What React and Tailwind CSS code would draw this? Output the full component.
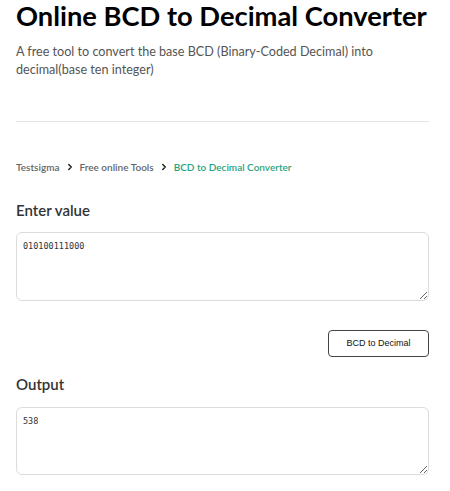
import React, { useState } from 'react';
import { ChevronRight } from 'lucide-react';

const font = { fontFamily: 'Lato, "Noto Sans", sans-serif' };

const App = () => {
  const [value, setValue] = useState('010100111000');
  const [output, setOutput] = useState('538');

  const convert = () => {
    const digits = value.replace(/\s/g, '').match(/.{1,4}/g) || [];
    setOutput(digits.map((d) => parseInt(d, 2)).join(''));
  };

  return (
    <div className="w-[450px] h-[491px] bg-white overflow-hidden" style={font}>
      <div className="w-[413px] ml-4">
        <h1 className="text-[27.3px] leading-[32px] font-bold text-black whitespace-nowrap">
          Online BCD to Decimal Converter
        </h1>
        <p className="mt-[11px] text-[12.6px] leading-[17.5px] text-[#555]">
          A free tool to convert the base BCD (Binary-Coded Decimal) into decimal(base ten integer)
        </p>

        <div className="mt-[43px] h-px bg-[#e3e3e3]" />

        <nav className="mt-[38px] flex items-center text-[10px] leading-[14px] font-semibold">
          <span className="text-[#666]">Testsigma</span>
          <ChevronRight size={10} strokeWidth={3.5} className="mx-[5px] text-[#222]" />
          <span className="text-[#666]">Free online Tools</span>
          <ChevronRight size={10} strokeWidth={3.5} className="mx-[5px] text-[#222]" />
          <span className="text-[#2ba37e]">BCD to Decimal Converter</span>
        </nav>

        <h2 className="mt-[27px] text-[15px] leading-[18px] font-semibold text-[#333]">Enter value</h2>
        <textarea
          value={value}
          onChange={(e) => setValue(e.target.value)}
          className="mt-[13px] block w-full h-[69px] rounded-md border border-[#dcdcdc] px-[6px] py-[8px] text-[8.5px] leading-[10px] text-[#333] outline-none"
          style={{ fontFamily: '"DejaVu Sans Mono", monospace' }}
        />

        <div className="flex justify-end mt-[29px]">
          <button
            onClick={convert}
            className="w-[101px] h-[27px] rounded-[4px] border border-[#444] bg-white text-[9px] text-[#111]"
            style={{ fontFamily: '"Liberation Sans", Arial, sans-serif' }}
          >
            BCD to Decimal
          </button>
        </div>

        <h2 className="mt-[18px] text-[15px] leading-[18px] font-semibold text-[#333]">Output</h2>
        <textarea
          readOnly
          value={output}
          className="mt-[14px] block w-full h-[68px] rounded-md border border-[#dcdcdc] px-[6px] py-[8px] text-[8.5px] leading-[10px] text-[#333] outline-none"
          style={{ fontFamily: '"DejaVu Sans Mono", monospace' }}
        />
      </div>
    </div>
  );
};

export default App;
